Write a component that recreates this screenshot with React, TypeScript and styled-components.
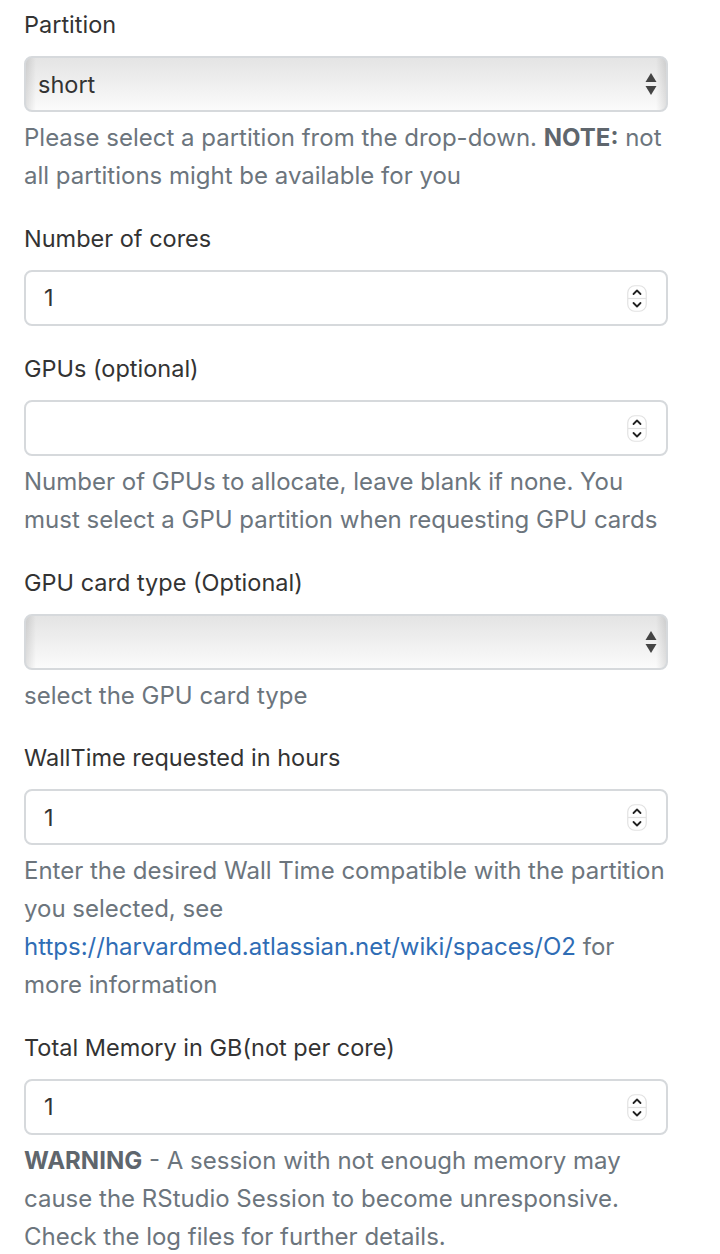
import React from "react";
import styled, { createGlobalStyle } from "styled-components";

const Global = createGlobalStyle`
  html, body { margin: 0; padding: 0; background: #ffffff; }
  body { font-family: Inter, "Noto Sans", "Liberation Sans", sans-serif; -webkit-font-smoothing: antialiased; }
  * { box-sizing: border-box; }
`;

const Form = styled.form`
  width: 644px;
  margin-left: 24px;
  padding-top: 6px;
  display: flex;
  flex-direction: column;
`;

const Group = styled.div`
  display: flex;
  flex-direction: column;
  margin-bottom: 24.5px;
`;

const Label = styled.label`
  height: 38px;
  line-height: 38px;
  font-size: 23.5px;
  color: #333333;
  margin-bottom: 12px;
  white-space: nowrap;
`;

const Control = styled.div`
  position: relative;
  height: 56px;
`;

const TextInput = styled.input`
  width: 100%;
  height: 56px;
  border: 2px solid #d6d9dc;
  border-radius: 8px;
  padding: 0 0 0 18px;
  font-family: inherit;
  font-size: 23.5px;
  color: #333333;
  background: #ffffff;
  outline: none;
`;

const Select = styled.select`
  appearance: none;
  -webkit-appearance: none;
  width: 100%;
  height: 56px;
  border: 2px solid #d6d9dc;
  border-radius: 8px;
  padding: 0 0 0 12px;
  font-family: inherit;
  font-size: 23.5px;
  color: #333333;
  outline: none;
  background:
    linear-gradient(to right, rgba(0,0,0,0.10) 0px, rgba(0,0,0,0) 10px, rgba(0,0,0,0) calc(100% - 10px), rgba(0,0,0,0.10) 100%),
    linear-gradient(to bottom, #e4e4e4 0%, #eeeeee 45%, #fbfbfb 100%);
`;

const SelectArrows = styled.svg`
  position: absolute;
  right: 11px;
  top: 17px;
  width: 12px;
  height: 22px;
  pointer-events: none;
`;

const Spinner = styled.svg`
  position: absolute;
  right: 21px;
  top: 15px;
  width: 20px;
  height: 27px;
  pointer-events: none;
`;

const Help = styled.p`
  margin: 7px 0 0 0;
  font-size: 24px;
  line-height: 38px;
  color: #6c757d;
  white-space: nowrap;
  b { font-weight: 700; color: #5f666d; }
  a { color: #2f6db5; text-decoration: none; }
`;

const ArrowsIcon = () => (
  <SelectArrows viewBox="0 0 12 22">
    <path d="M6 0 L11.5 9 L0.5 9 Z" fill="#444" />
    <path d="M6 22 L11.5 13 L0.5 13 Z" fill="#444" />
  </SelectArrows>
);

const SpinIcon = () => (
  <Spinner viewBox="0 0 20 27">
    <rect x="0.75" y="0.75" width="18.5" height="25.5" rx="7" fill="#fff" stroke="#e2e2e2" strokeWidth="1.2" />
    <line x1="1" y1="13.5" x2="19" y2="13.5" stroke="#e2e2e2" strokeWidth="1.2" />
    <path d="M6.5 9 L10 5.5 L13.5 9" fill="none" stroke="#222" strokeWidth="1.8" strokeLinecap="round" strokeLinejoin="round" />
    <path d="M6.5 18 L10 21.5 L13.5 18" fill="none" stroke="#222" strokeWidth="1.8" strokeLinecap="round" strokeLinejoin="round" />
  </Spinner>
);

const NumberField = ({ value }: { value: string }) => (
  <Control>
    <TextInput type="text" readOnly value={value} />
    <SpinIcon />
  </Control>
);

const SelectField = ({ value }: { value: string }) => (
  <Control>
    <Select value={value} onChange={() => {}}>
      <option value={value}>{value}</option>
    </Select>
    <ArrowsIcon />
  </Control>
);

export default function App() {
  return (
    <>
      <Global />
      <Form>
        <Group>
          <Label>Partition</Label>
          <SelectField value="short" />
          <Help>
            Please select a partition from the drop-down. <b>NOTE:</b> not
            <br />
            all partitions might be available for you
          </Help>
        </Group>
        <Group>
          <Label>Number of cores</Label>
          <NumberField value="1" />
        </Group>
        <Group>
          <Label>GPUs (optional)</Label>
          <NumberField value="" />
          <Help>
            Number of GPUs to allocate, leave blank if none. You
            <br />
            must select a GPU partition when requesting GPU cards
          </Help>
        </Group>
        <Group>
          <Label>GPU card type (Optional)</Label>
          <SelectField value="" />
          <Help>select the GPU card type</Help>
        </Group>
        <Group>
          <Label>WallTime requested in hours</Label>
          <NumberField value="1" />
          <Help>
            Enter the desired Wall Time compatible with the partition
            <br />
            you selected, see
            <br />
            <a href="#">https://harvardmed.atlassian.net/wiki/spaces/O2</a> for
            <br />
            more information
          </Help>
        </Group>
        <Group>
          <Label>Total Memory in GB(not per core)</Label>
          <NumberField value="1" />
          <Help>
            <b>WARNING</b> - A session with not enough memory may
            <br />
            cause the RStudio Session to become unresponsive.
            <br />
            Check the log files for further details.
          </Help>
        </Group>
      </Form>
    </>
  );
}
